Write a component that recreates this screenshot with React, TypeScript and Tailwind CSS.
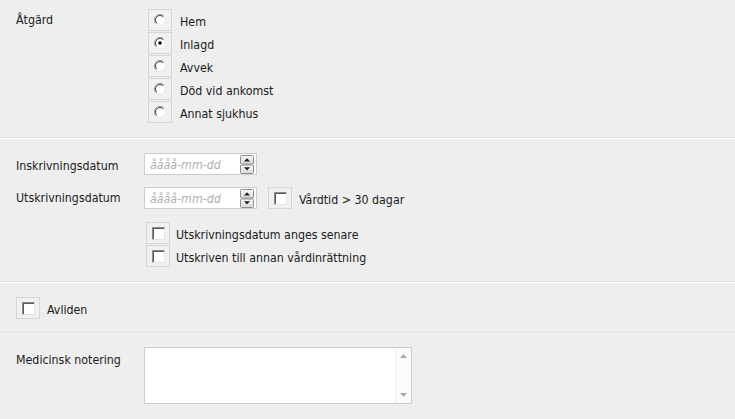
import React from "react";

const RadioIcon = ({ checked }: { checked?: boolean }) => (
  <svg width="12" height="12" viewBox="0 0 12 12">
    <circle cx="6" cy="6" r="5.5" fill="#ffffff" />
    <path d="M2.1 9.9 A5.5 5.5 0 0 1 9.9 2.1" fill="none" stroke="#9a9a9a" strokeWidth="1" />
    <path d="M2.8 9.2 A4.5 4.5 0 0 1 9.2 2.8" fill="none" stroke="#404040" strokeWidth="1" />
    <path d="M9.9 2.1 A5.5 5.5 0 0 1 2.1 9.9" fill="none" stroke="#e6e6e6" strokeWidth="1" />
    {checked && <circle cx="6" cy="6" r="1.8" fill="#000000" />}
  </svg>
);

const CheckIcon = () => (
  <div className="w-[13px] h-[13px] bg-white border border-t-[#8a8a8a] border-l-[#8a8a8a] border-r-[#e4e4e4] border-b-[#e4e4e4] shadow-[inset_1px_1px_0_#5a5a5a]" />
);

const Box = ({ children }: { children: React.ReactNode }) => (
  <div className="w-[24px] h-[22px] shrink-0 border border-[#d6d6d6] bg-[#f1f1f1] flex items-center justify-center">
    {children}
  </div>
);

const Radio = ({ label, checked }: { label: string; checked?: boolean }) => (
  <div className="flex items-center h-[22px]">
    <Box>
      <RadioIcon checked={checked} />
    </Box>
    <span className="ml-[8px] pt-[4px]">{label}</span>
  </div>
);

const Check = ({ label, gap = "ml-[6px]" }: { label: string; gap?: string }) => (
  <div className="flex items-center h-[22px]">
    <Box>
      <CheckIcon />
    </Box>
    <span className={`${gap} pt-[3px]`}>{label}</span>
  </div>
);

const Spinner = () => (
  <svg width="14" height="19" viewBox="0 0 14 19">
    <defs>
      <linearGradient id="sg" x1="0" y1="0" x2="0" y2="1">
        <stop offset="0" stopColor="#f8f8f8" />
        <stop offset="1" stopColor="#d8d8d8" />
      </linearGradient>
    </defs>
    <rect x="0.5" y="0.5" width="13" height="8.5" rx="1" fill="url(#sg)" stroke="#8e8e8e" />
    <rect x="0.5" y="10" width="13" height="8.5" rx="1" fill="url(#sg)" stroke="#8e8e8e" />
    <path d="M4 6.5 L7 3.3 L10 6.5 Z" fill="#1e1e1e" />
    <path d="M4 12.3 L7 15.5 L10 12.3 Z" fill="#1e1e1e" />
  </svg>
);

const DateInput = () => (
  <div className="w-[113px] h-[22px] shrink-0 bg-white border border-[#cdcdcd] flex items-center pl-[5px] pr-[2px]">
    <span className="italic text-[#b0b0b0] flex-1 pt-[2px]">åååå-mm-dd</span>
    <Spinner />
  </div>
);

const Divider = () => (
  <div>
    <div className="h-px bg-[#e3e3e3]" />
    <div className="h-px bg-[#f9f9f9]" />
  </div>
);

export default function App() {
  return (
    <div className="w-[735px] h-[419px] overflow-hidden bg-[#eeeeee] text-[#1a1a1a] text-[12.3px] leading-[14px] font-['DejaVu_Sans_Condensed','DejaVu_Sans',sans-serif]">
      <div className="flex pt-[9px] pb-[14px]">
        <div className="w-[148px] pl-[16px] mt-[4px]">Åtgärd</div>
        <div className="flex flex-col gap-[1px]">
          <Radio label="Hem" />
          <Radio label="Inlagd" checked />
          <Radio label="Avvek" />
          <Radio label="Död vid ankomst" />
          <Radio label="Annat sjukhus" />
        </div>
      </div>
      <Divider />
      <div className="flex flex-col pt-[14px] pb-[14px]">
        <div className="flex items-center h-[22px]">
          <div className="w-[144px] pl-[16px] pt-[4px]">Inskrivningsdatum</div>
          <DateInput />
        </div>
        <div className="flex items-center h-[22px] mt-[12px]">
          <div className="w-[144px] pl-[16px] self-start mt-[4px]">Utskrivningsdatum</div>
          <DateInput />
          <div className="ml-[11px]">
            <Check label="Vårdtid > 30 dagar" gap="ml-[7px]" />
          </div>
        </div>
        <div className="flex flex-col gap-[1px] pl-[146px] mt-[13px]">
          <Check label="Utskrivningsdatum anges senare" />
          <Check label="Utskriven till annan vårdinrättning" />
        </div>
      </div>
      <Divider />
      <div className="pt-[14px] pb-[13px] pl-[16px]">
        <Check label="Avliden" gap="ml-[7px]" />
      </div>
      <Divider />
      <div className="flex pt-[13px]">
        <div className="w-[144px] pl-[16px] mt-[6px]">Medicinsk notering</div>
        <div className="w-[268px] h-[57px] bg-white border border-[#cdcdcd] flex">
          <div className="flex-1" />
          <div className="w-[16px] border-l border-[#f0f0f0] bg-[#fbfbfb] flex flex-col items-center justify-between py-[6px]">
            <svg width="7" height="4" viewBox="0 0 7 4">
              <path d="M0 4 L3.5 0 L7 4 Z" fill="#a8a8a8" />
            </svg>
            <svg width="7" height="4" viewBox="0 0 7 4">
              <path d="M0 0 L3.5 4 L7 0 Z" fill="#a8a8a8" />
            </svg>
          </div>
        </div>
      </div>
    </div>
  );
}
